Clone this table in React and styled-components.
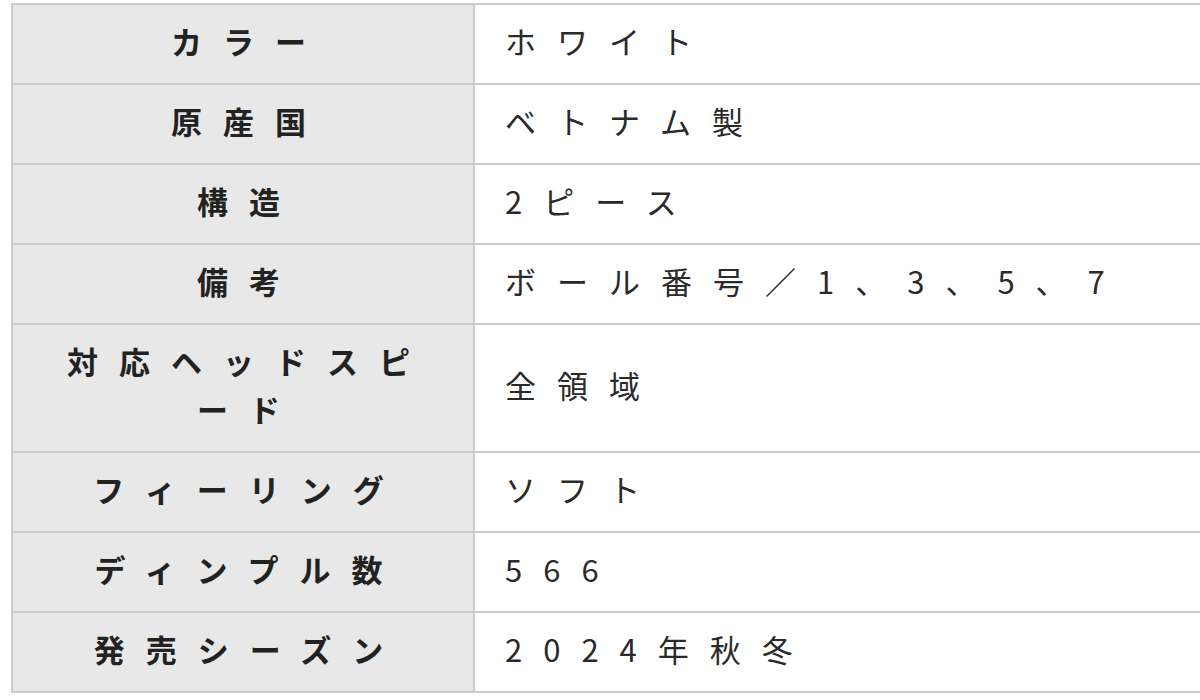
import styled, { createGlobalStyle } from "styled-components";

const GlobalStyle = createGlobalStyle`
    html, body {
        margin: 0;
        background: #ffffff;
        overflow: hidden;
    }
`;

const specs = [
    ["カラー", "ホワイト"],
    ["原産国", "ベトナム製"],
    ["構造", "2ピース"],
    ["備考", "ボール番号／1、3、5、7"],
    ["対応ヘッドスピード", "全領域"],
    ["フィーリング", "ソフト"],
    ["ディンプル数", "566"],
    ["発売シーズン", "2024年秋冬"],
];

const App = () => {
    return (
        <>
            <GlobalStyle />
            <Page>
                <SpecTable>
                    <tbody>
                        {specs.map(([label, value]) => (
                            <Row key={label}>
                                <Label>{label}</Label>
                                <Value>{value}</Value>
                            </Row>
                        ))}
                    </tbody>
                </SpecTable>
            </Page>
        </>
    );
};

const Page = styled.div`
    padding: 3px 0 0 11px;
    width: 1200px;
`;

const SpecTable = styled.table`
    width: 1220px;
    border-collapse: collapse;
    table-layout: fixed;
    font-family: "Noto Sans CJK JP", "Noto Sans", sans-serif;
    font-size: 31px;
    line-height: 48px;
    letter-spacing: 21px;
`;

const Row = styled.tr`
    border: 2px solid #cbcbcb;
`;

const Label = styled.th`
    width: 408px;
    padding: 12px 20px 18px 32px;
    background: #e8e8e8;
    border: 2px solid #cbcbcb;
    color: #222222;
    font-weight: 700;
    text-align: center;
    vertical-align: middle;
`;

const Value = styled.td`
    padding: 12px 20px 18px 30px;
    border: 2px solid #cbcbcb;
    color: #2a2a2a;
    font-weight: 400;
    text-align: left;
    vertical-align: middle;
    white-space: nowrap;
`;

export default App;
